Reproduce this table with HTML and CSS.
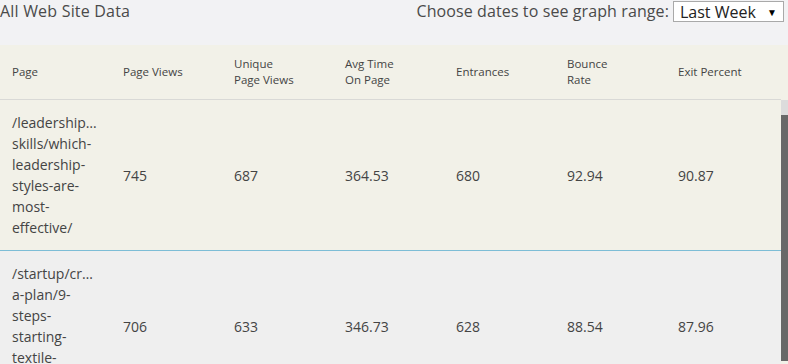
FILE: index.html
```html
<!DOCTYPE html>
<html>
<head>
<meta charset="utf-8">
<link rel="stylesheet" href="styles.css">
</head>
<body>
<div class="page">
  <div class="topbar">
    <div class="title">All Web Site Data</div>
    <div class="range">
      <span class="range-label">Choose dates to see graph range:</span>
      <div class="select"><span>Last Week</span><span class="arrow">&#9660;</span></div>
    </div>
  </div>
  <div class="table">
    <div class="thead">
      <div class="th">Page</div>
      <div class="th">Page Views</div>
      <div class="th">Unique<br>Page Views</div>
      <div class="th">Avg Time<br>On Page</div>
      <div class="th">Entrances</div>
      <div class="th">Bounce<br>Rate</div>
      <div class="th">Exit Percent</div>
    </div>
    <div class="tbody-wrap">
      <div class="tbody">
        <div class="row row-a">
          <div class="td td-page">/leadership…<br>skills/which-<br>leadership-<br>styles-are-<br>most-<br>effective/</div>
          <div class="td">745</div>
          <div class="td">687</div>
          <div class="td">364.53</div>
          <div class="td">680</div>
          <div class="td">92.94</div>
          <div class="td">90.87</div>
        </div>
        <div class="row row-b">
          <div class="td td-page">/startup/cr…<br>a-plan/9-<br>steps-<br>starting-<br>textile-<br>business/</div>
          <div class="td">706</div>
          <div class="td">633</div>
          <div class="td">346.73</div>
          <div class="td">628</div>
          <div class="td">88.54</div>
          <div class="td">87.96</div>
        </div>
      </div>
      <div class="scrollbar">
        <div class="scroll-btn"></div>
        <div class="scroll-thumb"></div>
      </div>
    </div>
  </div>
</div>
</body>
</html>
```

FILE: styles.css
```css
html, body {
  margin: 0;
  padding: 0;
  background: #f2f2f4;
  overflow: hidden;
}

.page {
  width: 788px;
  height: 364px;
  display: flex;
  flex-direction: column;
}

.topbar {
  height: 45px;
  flex: none;
  display: flex;
  justify-content: space-between;
  align-items: flex-start;
  font-family: "Open Sans", "Liberation Sans", sans-serif;
  font-size: 16px;
  color: #4a4a4a;
}

.title {
  padding-top: 0;
  line-height: 22px;
  letter-spacing: 0.2px;
}

.range {
  display: flex;
  align-items: center;
  gap: 4px;
  padding-top: 1px;
  padding-right: 4px;
}

.range-label {
  line-height: 21px;
  letter-spacing: 0.1px;
}

.select {
  width: 111px;
  height: 21px;
  box-sizing: border-box;
  border: 1px solid #a9a9a9;
  background: #ffffff;
  display: flex;
  align-items: center;
  justify-content: space-between;
  padding: 0 6px 0 6px;
  color: #222;
  font-size: 16px;
}

.arrow {
  font-size: 10px;
  color: #000;
}

.table {
  flex: 1;
  display: flex;
  flex-direction: column;
  min-height: 0;
  background: #f2f1e8;
  font-family: "Open Sans", "Noto Sans", sans-serif;
  color: #444;
}

.thead {
  display: grid;
  grid-template-columns: repeat(7, 111px);
  height: 54px;
  flex: none;
  border-bottom: 1px solid #d9d9d6;
  align-items: center;
  font-size: 11.5px;
  line-height: 16px;
  margin-right: 7px;
}

.th {
  padding-left: 12px;
}

.tbody-wrap {
  flex: 1;
  min-height: 0;
  display: flex;
}

.tbody {
  flex: 1;
  overflow: hidden;
}

.scrollbar {
  width: 7px;
  flex: none;
  display: flex;
  flex-direction: column;
  padding-bottom: 3px;
}

.scroll-btn {
  height: 15px;
  background: #dcdcdc;
}

.scroll-thumb {
  flex: 1;
  background: #686868;
}

.row {
  display: grid;
  grid-template-columns: repeat(7, 111px);
  align-items: center;
  font-size: 14px;
  line-height: 21px;
}

.row-a {
  background: #f2f1e8;
  border-bottom: 1px solid #7dbdd6;
}

.row-b {
  background: #efefef;
}

.td {
  padding: 12px 0 12px 12px;
}
```
